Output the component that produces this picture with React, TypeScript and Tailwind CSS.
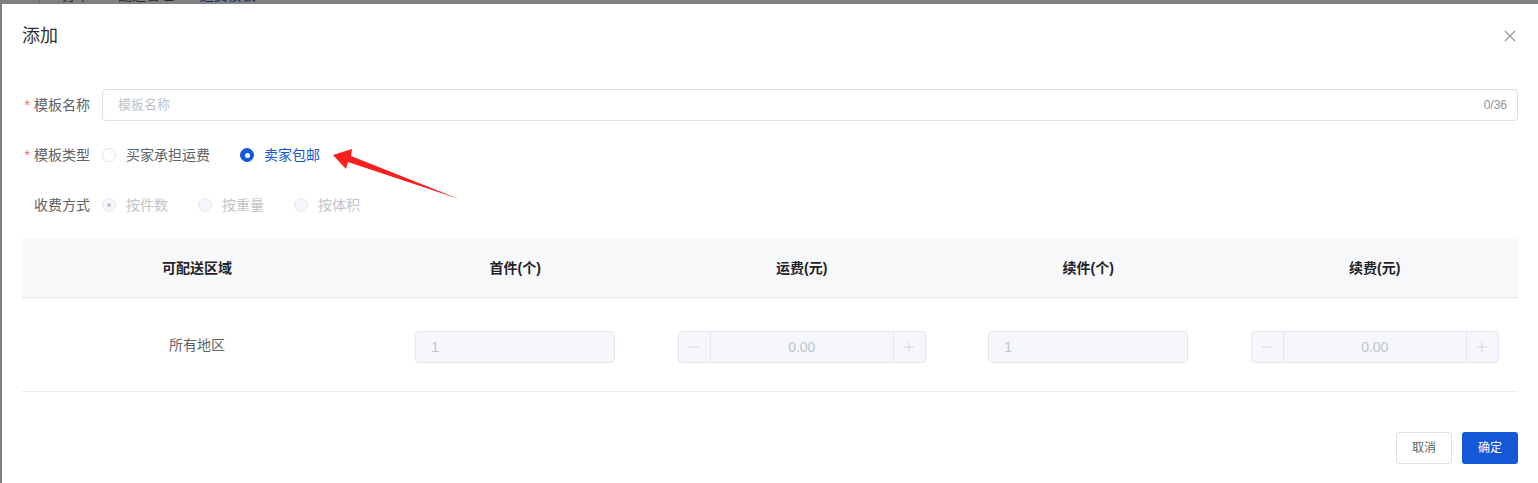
import React from "react";

const FONT = { fontFamily: '"Liberation Sans", "Noto Sans CJK SC", sans-serif' };

function Radio({ checked, disabled, label, last }: { checked?: boolean; disabled?: boolean; label: string; last?: boolean }) {
  let circle = "border-[#dcdfe6] bg-white";
  if (disabled) circle = "border-[#e4e7ed] bg-[#f5f7fa]";
  else if (checked) circle = "border-[#1558d6] bg-[#1558d6]";
  const text = disabled ? "text-[#c0c4cc]" : checked ? "text-[#1558d6]" : "text-[#606266]";
  return (
    <div className={`flex items-center ${last ? "" : "mr-[30px]"}`}>
      <span className={`w-[14px] h-[14px] rounded-full border flex items-center justify-center ${circle}`}>
        {checked && !disabled && <span className="w-[5px] h-[5px] rounded-full bg-white" />}
        {checked && disabled && <span className="w-[4px] h-[4px] rounded-full bg-[#c0c4cc]" />}
      </span>
      <span className={`ml-[10px] text-[14px] leading-[20px] ${text}`}>{label}</span>
    </div>
  );
}

function Label({ text, required }: { text: string; required?: boolean }) {
  return (
    <div className="w-[80px] pr-[12px] flex items-center justify-end text-[14px] text-[#606266] leading-[32px]">
      {required && <span className="text-[#f56c6c] mr-[4px]">*</span>}
      <span>{text}</span>
    </div>
  );
}

function DisabledInput({ value }: { value: string }) {
  return (
    <div className="w-[200px] h-[32px] rounded-[4px] border border-[#e4e7ed] bg-[#f5f7fa] flex items-center pl-[15px] text-[14px] text-[#c0c4cc]">
      {value}
    </div>
  );
}

function Stepper({ value }: { value: string }) {
  return (
    <div className="w-[248px] h-[32px] rounded-[4px] border border-[#e4e7ed] bg-[#f5f7fa] flex items-stretch text-[#c0c4cc]">
      <div className="w-[32px] border-r border-[#e4e7ed] flex items-center justify-center">
        <svg width="12" height="12" viewBox="0 0 12 12"><line x1="1" y1="6" x2="11" y2="6" stroke="#d4d7de" strokeWidth="1" /></svg>
      </div>
      <div className="flex-1 flex items-center justify-center text-[14px]">{value}</div>
      <div className="w-[32px] border-l border-[#e4e7ed] flex items-center justify-center">
        <svg width="12" height="12" viewBox="0 0 12 12"><line x1="1" y1="6" x2="11" y2="6" stroke="#d4d7de" strokeWidth="1" /><line x1="6" y1="1" x2="6" y2="11" stroke="#d4d7de" strokeWidth="1" /></svg>
      </div>
    </div>
  );
}

export default function App() {
  return (
    <div className="relative w-[1538px] h-[483px] bg-[#808080] flex flex-col overflow-hidden" style={FONT}>
      {/* dimmed page behind */}
      <div className="h-[4px] overflow-hidden relative">
        <div className="flex items-end text-[14px] leading-[18px] -mt-[14px] text-[#2c2c2c]">
          <span className="w-[40px] h-[18px] border-r border-[#6e6e6e]" />
          <span className="ml-[22px]">分卡</span>
          <span className="ml-[12px] text-[#5a5a5a]">/</span>
          <span className="ml-[12px]">配送管理</span>
          <span className="ml-[12px] text-[#5a5a5a]">/</span>
          <span className="ml-[10px] text-[#0b2c6a]">运费模板</span>
        </div>
      </div>
      <div className="flex flex-1 min-h-0">
        <div className="w-[2px]" />
        <div className="flex-1 bg-white flex flex-col px-[20px]">
          {/* header */}
          <div className="pt-[20px] flex items-center justify-between">
            <span className="text-[18px] leading-[24px] text-[#303133]">添加</span>
            <svg width="12" height="12" viewBox="0 0 12 12" className="mr-[2px]">
              <line x1="1" y1="1" x2="11" y2="11" stroke="#909399" strokeWidth="1.1" />
              <line x1="11" y1="1" x2="1" y2="11" stroke="#909399" strokeWidth="1.1" />
            </svg>
          </div>

          {/* form */}
          <div className="mt-[41px] flex flex-col gap-[18px]">
            <div className="flex h-[32px]">
              <Label text="模板名称" required />
              <div className="flex-1 h-[32px] rounded-[4px] border border-[#dcdfe6] flex items-center pl-[15px] pr-[10px]">
                <span className="flex-1 text-[13px] text-[#c0c4cc]">模板名称</span>
                <span className="text-[12px] text-[#909399]">0/36</span>
              </div>
            </div>
            <div className="flex h-[32px] items-center">
              <Label text="模板类型" required />
              <Radio label="买家承担运费" />
              <Radio label="卖家包邮" checked />
            </div>
            <div className="flex h-[32px] items-center">
              <Label text="收费方式" />
              <Radio label="按件数" checked disabled />
              <Radio label="按重量" disabled />
              <Radio label="按体积" disabled last />
            </div>
          </div>

          {/* table */}
          <div className="mt-[18px] flex flex-col">
            <div className="h-[59px] bg-[#f7f8fa] border-b border-[#e4e9f0] flex items-center text-[14px] font-bold text-[#1f2329]">
              <div className="w-[350px] text-center">可配送区域</div>
              <div className="flex-1 text-center">首件(个)</div>
              <div className="flex-1 text-center">运费(元)</div>
              <div className="flex-1 text-center">续件(个)</div>
              <div className="flex-1 text-center">续费(元)</div>
            </div>
            <div className="h-[94px] pt-[5px] border-b border-[#e8ebf0] flex items-center">
              <div className="w-[350px] text-center text-[14px] text-[#606266] -mt-[4px]">所有地区</div>
              <div className="flex-1 flex justify-center"><DisabledInput value="1" /></div>
              <div className="flex-1 flex justify-center"><Stepper value="0.00" /></div>
              <div className="flex-1 flex justify-center"><DisabledInput value="1" /></div>
              <div className="flex-1 flex justify-center"><Stepper value="0.00" /></div>
            </div>
          </div>

          {/* footer */}
          <div className="mt-[40px] flex justify-end gap-[10px]">
            <button className="w-[56px] h-[32px] rounded-[3px] border border-[#dcdfe6] bg-white text-[12px] text-[#606266]">取消</button>
            <button className="w-[56px] h-[32px] rounded-[3px] bg-[#1558d6] text-[12px] text-white">确定</button>
          </div>
        </div>
      </div>

      {/* red annotation arrow */}
      <svg className="absolute left-0 top-0 pointer-events-none" width="1538" height="483">
        <polygon points="333,155 352,149 351,156 459,199 348,162 346,169" fill="#fb1f1f" />
      </svg>
    </div>
  );
}
